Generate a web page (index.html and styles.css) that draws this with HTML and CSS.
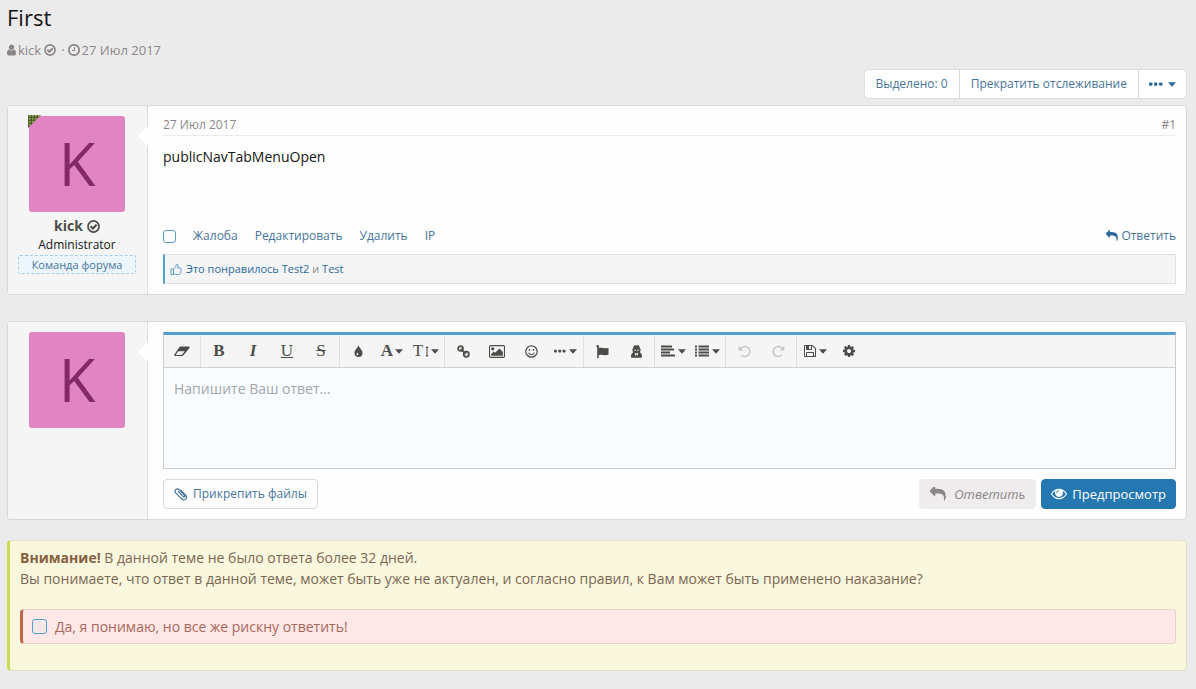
FILE: index.html
```html
<!DOCTYPE html>
<html lang="ru">
<head>
<meta charset="utf-8">
<title>First</title>
<link rel="stylesheet" href="styles.css">
</head>
<body>
<svg class="sprite" aria-hidden="true">
  <symbol id="user" viewBox="256 64 1280 1664"><path d="M1536 1399q0 109-62.5 187t-150.5 78h-854q-88 0-150.5-78t-62.5-187q0-85 8.5-160.5t31.5-152 58.5-131 94-89 134.5-34.5q131 128 313 128t313-128q76 0 134.5 34.5t94 89 58.5 131 31.5 152 8.5 160.5zm-256-887q0 159-112.5 271.5t-271.5 112.5-271.5-112.5-112.5-271.5 112.5-271.5 271.5-112.5 271.5 112.5 112.5 271.5z"/></symbol>
  <symbol id="verified" viewBox="0 0 12 12"><circle cx="6" cy="6" r="5.100" fill="none" stroke="currentColor" stroke-width="1.600"/><path d="M3.300 5.800l2.100 2.100 3.500-3.600" fill="none" stroke="currentColor" stroke-width="2"/></symbol>
  <symbol id="clock" viewBox="128 128 1536 1536"><path d="M1024 544v448q0 14-9 23t-23 9h-320q-14 0-23-9t-9-23v-64q0-14 9-23t23-9h224v-352q0-14 9-23t23-9h64q14 0 23 9t9 23zm416 352q0-148-73-273t-198-198-273-73-273 73-198 198-73 273 73 273 198 198 273 73 273-73 198-198 73-273zm224 0q0 209-103 385.5t-279.5 279.5-385.5 103-385.5-103-279.5-279.5-103-385.5 103-385.5 279.5-279.5 385.5-103 385.5 103 279.5 279.5 103 385.5z"/></symbol>
  <symbol id="reply" viewBox="0 128 1792 1536"><path d="M1792 1120q0 166-127 451-3 7-10.5 24t-13.5 30-13 22q-12 17-28 17-15 0-23.5-10t-8.5-25q0-9 2.500-26.500t2.500-23.500q5-68 5-123 0-112-19.500-200.500t-54-153.500-89-112-115.500-79-143.500-49-162.500-27.500-183-8.500h-224v256q0 26-19 45t-45 19-45-19l-512-512q-19-19-19-45t19-45l512-512q19-19 45-19t45 19 19 45v256h224q713 0 875 403 53 134 53 333z"/></symbol>
  <symbol id="eye" viewBox="0 320 1792 1280"><path d="M1664 960q-152-236-381-353 61 104 61 225 0 185-131.5 316.5t-316.5 131.5-316.5-131.5-131.5-316.5q0-121 61-225-229 117-381 353 133 205 333.5 326.5t434.5 121.5 434.5-121.5 333.5-326.5zm-720-384q0-20-14-34t-34-14q-125 0-214.5 89.5t-89.5 214.5q0 20 14 34t34 14 34-14 14-34q0-86 61-147t147-61q20 0 34-14t14-34zm848 384q0 34-20 69-140 230-376.5 368.5t-499.5 138.5-499.5-139-376.5-368q-20-35-20-69t20-69q140-229 376.5-368t499.5-139 499.5 139 376.5 368q20 35 20 69z"/></symbol>
  <symbol id="image" viewBox="-64 128 1920 1536"><path d="M576 576q0 80-56 136t-136 56-136-56-56-136 56-136 136-56 136 56 56 136zm1024 384v448h-1408v-192l320-320 160 160 512-512zm96-704h-1600q-13 0-22.5 9.5t-9.5 22.5v1216q0 13 9.5 22.5t22.5 9.5h1600q13 0 22.5-9.5t9.5-22.5v-1216q0-13-9.5-22.5t-22.5-9.5zm160 32v1216q0 66-47 113t-113 47h-1600q-66 0-113-47t-47-113v-1216q0-66 47-113t113-47h1600q66 0 113 47t47 113z"/></symbol>
  <symbol id="cog" viewBox="128 128 1536 1536"><path d="M1152 896q0-106-75-181t-181-75-181 75-75 181 75 181 181 75 181-75 75-181zm512-109v222q0 12-8 23t-20 13l-185 28q-19 54-39 91 35 50 107 138 10 12 10 25t-9 23q-27 37-99 108t-94 71q-12 0-26-9l-138-108q-44 23-91 38-16 136-29 186-7 28-36 28h-222q-14 0-24.5-8.5t-11.5-21.5l-28-184q-49-16-90-37l-141 107q-10 9-25 9-14 0-25-11-126-114-165-168-7-10-7-23 0-12 8-23 15-21 51-66.5t54-70.5q-27-50-41-99l-183-27q-13-2-21-12.5t-8-23.5v-222q0-12 8-23t19-13l186-28q14-46 39-92-40-57-107-138-10-12-10-24 0-10 9-23 26-36 98.5-107.5t94.5-71.5q13 0 26 10l138 107q44-23 91-38 16-136 29-186 7-28 36-28h222q14 0 24.5 8.5t11.5 21.5l28 184q49 16 90 37l142-107q9-9 24-9 13 0 25 10 129 119 165 170 7 8 7 22 0 12-8 23-15 21-51 66.5t-54 70.5q26 50 41 98l183 28q13 2 21 12.5t8 23.5z"/></symbol>
  <symbol id="save" viewBox="128 128 1536 1536"><path d="M512 1536h768v-384h-768v384zm896 0h128v-896q0-14-10-38.5t-20-34.5l-281-281q-10-10-34-20t-39-10v416q0 40-28 68t-68 28h-576q-40 0-68-28t-28-68v-416h-128v1280h128v-416q0-40 28-68t68-28h832q40 0 68 28t28 68v416zm-384-928v-320q0-13-9.5-22.5t-22.5-9.5h-192q-13 0-22.5 9.5t-9.5 22.5v320q0 13 9.5 22.5t22.5 9.5h192q13 0 22.5-9.5t9.5-22.5zm640 32v928q0 40-28 68t-68 28h-1344q-40 0-68-28t-28-68v-1344q0-40 28-68t68-28h928q40 0 88 20t76 48l280 280q28 28 48 76t20 88z"/></symbol>
  <symbol id="undo" viewBox="0 0 13 13"><path d="M3.2 9.9A5 5 0 1 0 2.4 4.2" fill="none" stroke="currentColor" stroke-width="1.5"/><path d="M.7.8v4.6h4.6z"/></symbol>
  <symbol id="redo" viewBox="0 0 13 13"><path d="M9.8 9.9A5 5 0 1 1 10.6 4.2" fill="none" stroke="currentColor" stroke-width="1.5"/><path d="M12.3.8v4.6H7.7z"/></symbol>
  <symbol id="caret" viewBox="0 0 8 5"><path d="M0 .3h8L4 4.7z"/></symbol>
  <symbol id="dots" viewBox="0 0 14 4"><rect x="0" y=".5" width="3.4" height="3.2" rx="1"/><rect x="5" y=".5" width="3.4" height="3.2" rx="1"/><rect x="10" y=".5" width="3.4" height="3.2" rx="1"/></symbol>
  <symbol id="like" viewBox="0 0 12 13"><path d="M1 6h2.5v5.6H1zM3.5 6.1C5 5.3 6 3.8 6.1 2.2c.1-1.3 1.9-1.3 2 .3 0 .9-.3 1.7-.7 2.4h2.7c1.3 0 1.5 1.5.7 2 .6.6.4 1.5-.2 1.8.3.7.1 1.3-.5 1.6.1.8-.4 1.3-1.3 1.3H7c-1.400 0-2-.7-3.500-.7" fill="none" stroke="currentColor" stroke-width="1"/></symbol>
  <symbol id="eraser" viewBox="0 0 16 11"><path fill-rule="evenodd" d="M6.600.5h8.200c.8 0 1.200.7.700 1.400l-5.800 7.200c-.4.600-.8.900-1.500.9H1C.2 10-.1 9.300.4 8.600L5.300 1.200C5.700.7 6 .5 6.600.5zM4.200 5.200 1.700 8.900h6.100l2.900-3.700z"/></symbol>
  <symbol id="tint" viewBox="0 0 9 12"><path fill-rule="evenodd" d="M4.500.3C5.200 3 8.500 5 8.500 8a4 4 0 0 1-8 0C.5 5 3.800 3 4.500.3zM3.400 7.600c-.5.700-.8 1.100-.8 1.600 0 1.300 1.700 1.200 1.700 0 0-.6-.5-.9-.9-1.600z"/></symbol>
  <symbol id="link" viewBox="0 0 14 14"><g fill="none" stroke="currentColor" stroke-width="1.900"><circle cx="3.800" cy="3.800" r="2.600"/><circle cx="10" cy="10" r="2.800"/><path d="M4 4.300l5.500 5.200"/></g></symbol>
  <symbol id="smile" viewBox="0 0 13 13"><circle cx="6.500" cy="6.500" r="5.700" fill="none" stroke="currentColor" stroke-width="1.200"/><circle cx="4.500" cy="4.900" r=".9"/><circle cx="8.500" cy="4.900" r=".9"/><path d="M3.600 7.600c1 2.800 4.800 2.800 5.800 0" fill="none" stroke="currentColor" stroke-width="1.100"/></symbol>
  <symbol id="flag" viewBox="0 0 12 13"><circle cx="1.300" cy="1.400" r="1.300"/><path d="M.7 1.500h1.500V13H.7zM2 3.300c3.300-1.300 5 .9 10-.5v7c-4.700 1.300-6.500-.8-10 .5z"/></symbol>
  <symbol id="spy" viewBox="0 0 12 13"><path fill-rule="evenodd" d="M3.700.5C4.500 0 5 .5 6 .5S7.500 0 8.300.5c.6.500.9 1.600 1 3l1.200.8-.7.900c.2 1-.1 1.800-.4 2.400 1.500.7 2.100 2 2.100 3.700 0 1.100-.4 1.500-1.300 1.500H1.800C.9 12.800.5 12.400.5 11.300c0-1.700.6-3 2.100-3.700-.3-.6-.6-1.400-.4-2.400l-.7-.9 1.200-.8c.1-1.400.4-2.500 1-3zM3.800 4.700v1h1.700v-1zM6.500 4.700v1h1.700v-1zM4.200 7.800l.9 3.100.9-1.500.9 1.500.9-3.100-1.800.8z"/></symbol>
  <symbol id="align" viewBox="0 0 14 12"><path d="M0 .5h11v2H0zM0 3.500h13v2H0zM0 6.500h9v2H0zM0 9.500h14v2H0z"/></symbol>
  <symbol id="list" viewBox="0 0 14 12"><path d="M0 .5h2v2H0zM0 3.500h2v2H0zM0 6.500h2v2H0zM0 9.500h2v2H0zM3.500.5H14v2H3.500zM3.500 3.500H14v2H3.500zM3.500 6.500H14v2H3.500zM3.500 9.500H14v2H3.500z"/></symbol>
  <symbol id="updown" viewBox="0 0 4 13"><path d="M1.500 2.500h1v8h-1zM.5 3 2 1l1.500 2zM.5 10h3L2 12z"/></symbol>
  <symbol id="clip" viewBox="0 0 14 14"><path d="M4.300 4.500l4.900 5.100c1 1 2.300-.2 1.400-1.300L5.300 2.800C3 .6-.4 3.300 1.700 5.800l5.900 6c2.700 2.600 6.600-.6 4.200-3.500L7.100 3.500" fill="none" stroke="currentColor" stroke-width="1.200" stroke-linecap="round"/></symbol>
</svg>

<main class="page">
  <header>
    <h1 class="title">First</h1>
    <div class="byline">
      <svg class="icon-user"><use href="#user"/></svg>
      <a href="#kick">kick</a>
      <svg class="icon-12"><use href="#verified"/></svg>
      <span class="byline-dot">·</span>
      <svg class="icon-12"><use href="#clock"/></svg>
      <a href="#post-1"><time datetime="2017-07-27">27 Июл 2017</time></a>
    </div>
  </header>

  <div class="thread-tools">
    <div class="button-group">
      <button type="button">Выделено: 0</button>
      <button type="button">Прекратить отслеживание</button>
      <button type="button" class="more" aria-label="Ещё"><svg class="icon-dots"><use href="#dots"/></svg><svg class="icon-caret"><use href="#caret"/></svg></button>
    </div>
  </div>

  <article class="card" id="post-1">
    <aside class="author">
      <a class="avatar avatar-online" href="#kick">K</a>
      <a class="author-name" href="#kick">kick <svg class="icon-13"><use href="#verified"/></svg></a>
      <span class="author-role">Administrator</span>
      <em class="badge">Команда форума</em>
    </aside>
    <div class="content">
      <div class="post-head"><a href="#post-1">27 Июл 2017</a><a href="#post-1">#1</a></div>
      <div class="post-text">publicNavTabMenuOpen</div>
      <div class="post-actions">
        <input type="checkbox" class="check check-small" aria-label="Выбрать сообщение">
        <a href="#report">Жалоба</a>
        <a href="#edit">Редактировать</a>
        <a href="#delete">Удалить</a>
        <a href="#ip">IP</a>
        <a class="reply-link" href="#reply-form"><svg class="icon-12"><use href="#reply"/></svg>Ответить</a>
      </div>
      <div class="likes"><svg class="icon-like"><use href="#like"/></svg><a href="#likes">Это понравилось Test2 <span>и</span> Test</a></div>
    </div>
  </article>

  <form class="card card-reply" id="reply-form">
    <aside class="author"><a class="avatar" href="#kick">K</a></aside>
    <div class="content">
      <div class="editor">
        <div class="toolbar" role="toolbar">
          <div class="tools"><button type="button" aria-label="Очистить"><svg class="icon-eraser"><use href="#eraser"/></svg></button></div>
          <div class="tools">
            <button type="button" class="letter"><b>B</b></button>
            <button type="button" class="letter"><b><i>I</i></b></button>
            <button type="button" class="letter"><u>U</u></button>
            <button type="button" class="letter"><s>S</s></button>
          </div>
          <div class="tools">
            <button type="button" aria-label="Цвет"><svg class="icon-tint"><use href="#tint"/></svg></button>
            <button type="button" class="letter"><b>A</b><svg class="icon-caret"><use href="#caret"/></svg></button>
            <button type="button" class="letter">T<svg class="icon-updown"><use href="#updown"/></svg><svg class="icon-caret"><use href="#caret"/></svg></button>
          </div>
          <div class="tools">
            <button type="button" aria-label="Ссылка"><svg class="icon-13"><use href="#link"/></svg></button>
            <button type="button" aria-label="Изображение"><svg class="icon-image"><use href="#image"/></svg></button>
            <button type="button" aria-label="Смайлы"><svg class="icon-13"><use href="#smile"/></svg></button>
            <button type="button" class="with-caret" aria-label="Вставить"><svg class="icon-dots-small"><use href="#dots"/></svg><svg class="icon-caret"><use href="#caret"/></svg></button>
          </div>
          <div class="tools">
            <button type="button" aria-label="Флаг"><svg class="icon-13"><use href="#flag"/></svg></button>
            <button type="button" aria-label="Скрыть"><svg class="icon-13"><use href="#spy"/></svg></button>
          </div>
          <div class="tools">
            <button type="button" class="with-caret" aria-label="Выравнивание"><svg class="icon-lines"><use href="#align"/></svg><svg class="icon-caret"><use href="#caret"/></svg></button>
            <button type="button" class="with-caret" aria-label="Список"><svg class="icon-lines"><use href="#list"/></svg><svg class="icon-caret"><use href="#caret"/></svg></button>
          </div>
          <div class="tools">
            <button type="button" disabled aria-label="Отменить"><svg class="icon-13"><use href="#undo"/></svg></button>
            <button type="button" disabled aria-label="Повторить"><svg class="icon-13"><use href="#redo"/></svg></button>
          </div>
          <div class="tools">
            <button type="button" class="with-caret" aria-label="Черновики"><svg class="icon-12"><use href="#save"/></svg><svg class="icon-caret"><use href="#caret"/></svg></button>
            <button type="button" aria-label="Настройки"><svg class="icon-12"><use href="#cog"/></svg></button>
          </div>
        </div>
        <textarea placeholder="Напишите Ваш ответ..." aria-label="Ответ"></textarea>
      </div>
      <div class="form-actions">
        <button type="button" class="btn btn-attach"><svg class="icon-14"><use href="#clip"/></svg>Прикрепить файлы</button>
        <button type="submit" class="btn btn-disabled" disabled><svg class="icon-16"><use href="#reply"/></svg>Ответить</button>
        <button type="button" class="btn btn-primary"><svg class="icon-eye"><use href="#eye"/></svg>Предпросмотр</button>
      </div>
    </div>
  </form>

  <section class="notice">
    <p><strong>Внимание!</strong> В данной теме не было ответа более 32 дней.<br>Вы понимаете, что ответ в данной теме, может быть уже не актуален, и согласно правил, к Вам может быть применено наказание?</p>
    <label class="confirm"><input type="checkbox" class="check">Да, я понимаю, но все же рискну ответить!</label>
  </section>
</main>
</body>
</html>
```

FILE: styles.css
```css
* { box-sizing: border-box; }
body {
  margin: 0;
  background: #ebebeb;
  color: #141414;
  font: 13px/20px "Open Sans", "Noto Sans", sans-serif;
}
a { color: inherit; text-decoration: none; }
button, textarea { font: inherit; color: inherit; }
svg { fill: currentColor; flex: none; }
.sprite { position: absolute; width: 0; height: 0; }
.page { padding: 1px 9px 0 7px; }

.icon-user { width: 9px; height: 12px; }
.icon-12 { width: 12px; height: 12px; }
.icon-13 { width: 13px; height: 13px; }
.icon-14 { width: 14px; height: 14px; }
.icon-16 { width: 16px; height: 14px; }
.icon-eye { width: 16px; height: 12px; }
.icon-like { width: 12px; height: 13px; }
.icon-dots { width: 14px; height: 4px; }
.icon-dots-small { width: 12px; height: 4px; }
.icon-caret { width: 8px; height: 5px; }
.icon-eraser { width: 16px; height: 11px; }
.icon-tint { width: 9px; height: 12px; }
.icon-image { width: 16px; height: 13px; }
.icon-lines { width: 14px; height: 12px; }
.icon-updown { width: 4px; height: 13px; }

.title { margin: 0; font-size: 22px; line-height: 32px; font-weight: 400; }
.byline {
  display: flex;
  align-items: center;
  gap: 3px;
  padding-top: 7px;
  color: #8c8688;
}
.byline svg { margin-right: -1px; }
.byline-dot { padding-left: 3px; }

.thread-tools { display: flex; justify-content: flex-end; padding: 9px 0 6px; }
.button-group {
  display: flex;
  height: 30px;
  background: #fff;
  border: 1px solid #dfdfdf;
  border-radius: 4px;
  color: #47759b;
  font-size: 12px;
}
.button-group button {
  padding: 0 11px;
  background: none;
  border: 0;
  border-right: 1px solid #d8d8d8;
}
.button-group button:last-child { border-right: 0; }
.button-group .more { display: flex; align-items: center; gap: 5px; padding: 0 10px; color: #2c6a9e; }

.card {
  display: flex;
  min-height: 190px;
  background: #fefefe;
  border: 1px solid #d8d8d8;
  border-radius: 4px;
}
.card-reply { margin-top: 26px; min-height: 199px; }
.author {
  position: relative;
  display: flex;
  flex: none;
  flex-direction: column;
  align-items: center;
  width: 140px;
  padding: 10px 11px 10px 10px;
  background: #f5f5f5;
  border-right: 1px dotted #c8c8c8;
  border-radius: 3px 0 0 3px;
}
.author::after {
  content: "";
  position: absolute;
  top: 20px;
  right: -1px;
  border: 10px solid transparent;
  border-left: 0;
  border-right-color: #fefefe;
}
.avatar {
  position: relative;
  width: 96px;
  height: 96px;
  background: #e085c2;
  border-radius: 3px;
  color: #85286a;
  font-size: 60px;
  line-height: 94px;
  text-align: center;
}
.avatar-online::before {
  content: "";
  position: absolute;
  top: -1px;
  left: -1px;
  width: 13px;
  height: 13px;
  background: repeating-conic-gradient(#8f9f4e 0 25%, #4e5f2e 0 100%) 0 0 / 3px 3px;
  clip-path: polygon(0 0, 100% 0, 0 100%);
}
.author-name {
  display: flex;
  align-items: center;
  gap: 4px;
  padding-top: 3px;
  font-size: 14px;
  line-height: 22px;
  font-weight: 700;
  color: #4b4e48;
}
.author-role { font-size: 12px; line-height: 16px; }
.badge {
  align-self: stretch;
  margin-top: 2px;
  background: #edf6fd;
  border: 1px dashed #a9cfec;
  border-radius: 2px;
  color: #47759b;
  font-size: 11px;
  line-height: 17px;
  font-style: normal;
  text-align: center;
}
.content {
  display: flex;
  flex: 1;
  flex-direction: column;
  min-width: 0;
  padding: 10px 10px 10px 15px;
}
.card-reply .content { padding-bottom: 9px; }
.post-head {
  display: flex;
  justify-content: space-between;
  padding-bottom: 1px;
  border-bottom: 1px solid #ebebeb;
  color: #8c8688;
  font-size: 12px;
  line-height: 18px;
}
.post-text { padding-top: 10px; font-size: 14px; line-height: 22px; }
.post-actions {
  display: flex;
  align-items: center;
  gap: 17px;
  margin-top: auto;
  padding-bottom: 8px;
  color: #47759b;
  font-size: 12px;
}
.reply-link { display: flex; align-items: center; gap: 3px; margin-left: auto; }
.reply-link svg { color: #2c6a9e; }
.likes {
  display: flex;
  align-items: center;
  gap: 4px;
  height: 30px;
  padding: 0 5px;
  background: #f5f5f5;
  border: 1px solid #dfdfdf;
  border-left: 2px solid #5aa0c4;
  color: #2c6a9e;
  font-size: 11px;
}
.likes svg { color: #5a9bcb; }
.likes span { color: #8c8688; }
.check {
  appearance: none;
  width: 15px;
  height: 15px;
  margin: 0;
  background: transparent;
  border: 1px solid #4d9fd6;
  border-radius: 3px;
}
.check-small { width: 13px; height: 13px; border-color: #5a9bbd; }

.editor { border: 1px solid #ccc; border-top: 3px solid #529fd0; }
.toolbar {
  display: flex;
  height: 33px;
  background: #f5f5f5;
  border-bottom: 1px solid #d0d0d0;
  color: #4b4e48;
}
.tools { display: flex; padding: 0 1px; border-right: 1px solid #dfdfdf; }
.tools:last-child { border-right: 0; }
.tools button {
  display: flex;
  align-items: center;
  justify-content: center;
  gap: 2px;
  width: 34px;
  padding: 0;
  background: none;
  border: 0;
}
.tools .with-caret { gap: 3px; }
.tools button:disabled { color: #c6c6c6; }
.tools .letter { font: 17px/20px "Liberation Serif", serif; }
.editor textarea {
  display: block;
  width: 100%;
  height: 100px;
  padding: 11px 10px;
  background: #f8fcff;
  border: 0;
  resize: none;
  font-size: 14px;
}
.editor textarea::placeholder { color: #a2a6a9; opacity: 1; }
.form-actions { display: flex; gap: 5px; padding-top: 10px; }
.btn {
  display: flex;
  align-items: center;
  gap: 5px;
  height: 30px;
  padding: 0 10px;
  background: #fefefe;
  border: 1px solid #d8d8d8;
  border-radius: 4px;
  color: #47759b;
}
.btn-attach { font-size: 12px; }
.btn-disabled {
  gap: 8px;
  margin-left: auto;
  background: #eeecec;
  border-color: #eeecec;
  color: #8c8688;
  font-style: italic;
}
.btn-primary { padding: 0 9px; background: #2577b1; border-color: #2577b1; color: #fff; }

.notice {
  margin-top: 20px;
  padding: 6px 10px 26px;
  background: #faf7df;
  border: 1px solid #e2dfc8;
  border-left: 3px solid #cddc4f;
  border-radius: 4px;
  color: #7a6650;
  font-size: 14px;
  line-height: 21px;
}
.notice p { margin: 0 0 20px; }
.notice strong { color: #84603f; }
.confirm {
  display: flex;
  align-items: center;
  gap: 8px;
  height: 35px;
  padding: 0 9px;
  background: #fee8e7;
  border: 1px solid #e8cfc8;
  border-left: 3px solid #bd6a4b;
  border-radius: 4px;
  color: #a8675b;
}
```
